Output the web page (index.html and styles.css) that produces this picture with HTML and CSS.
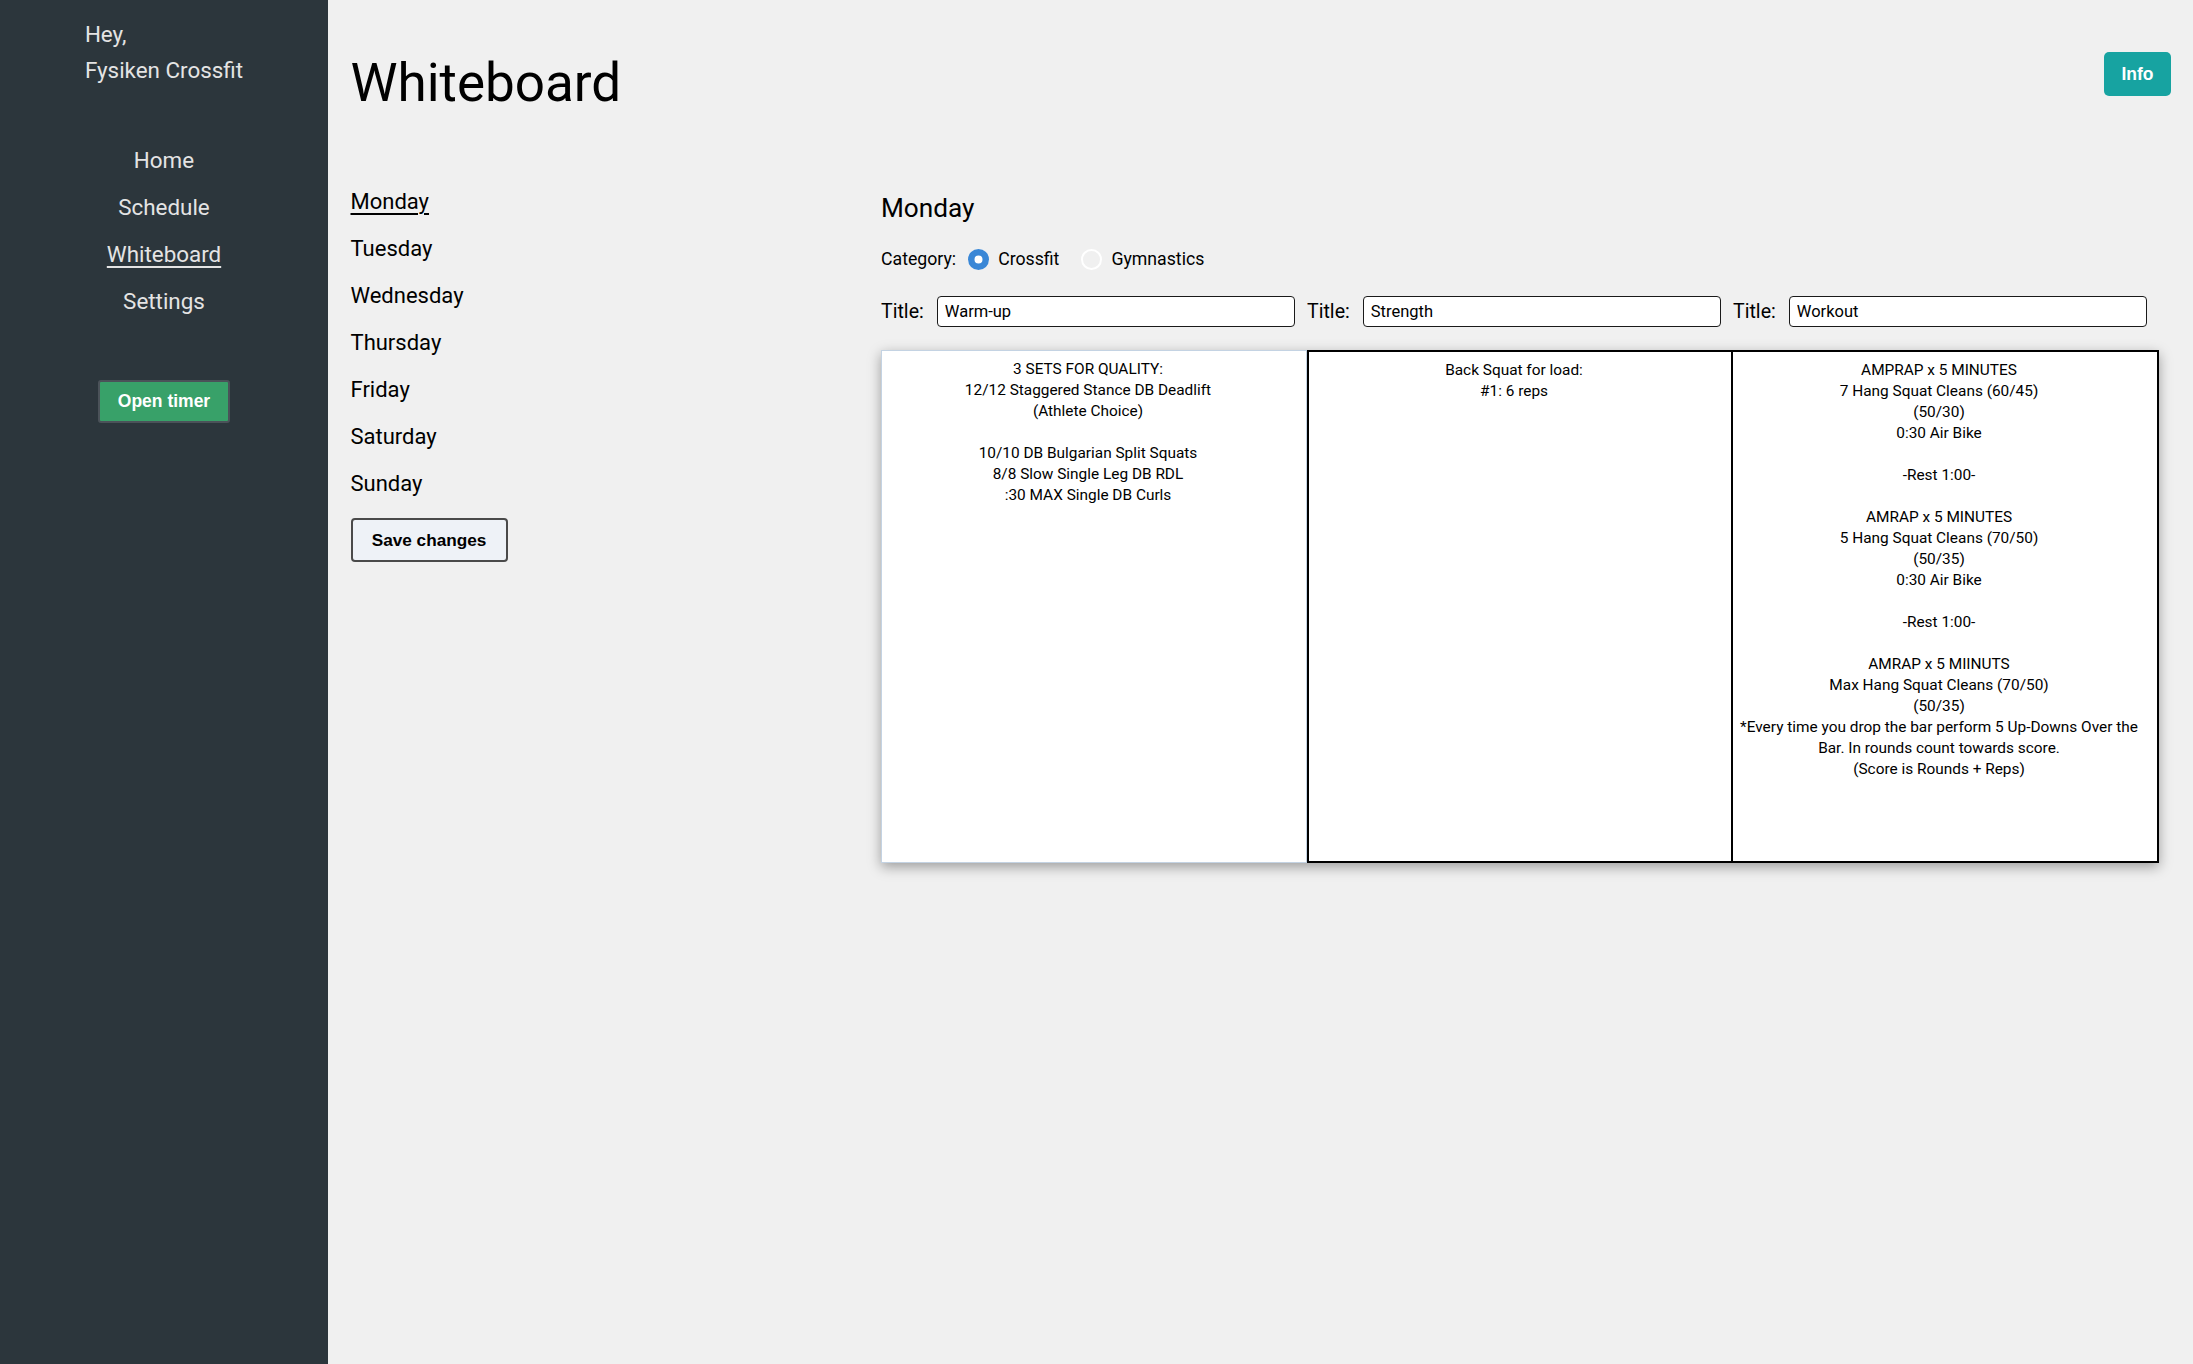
FILE: index.html
```html
<!DOCTYPE html>
<html lang="en">
<head>
<meta charset="utf-8">
<title>Whiteboard</title>
<link rel="stylesheet" href="styles.css">
</head>
<body>
<div class="app">
  <aside class="sidebar">
    <div class="greeting">Hey,<br>Fysiken Crossfit</div>
    <nav class="nav">
      <a class="nav-link">Home</a>
      <a class="nav-link">Schedule</a>
      <a class="nav-link nav-link-active">Whiteboard</a>
      <a class="nav-link">Settings</a>
    </nav>
    <button class="timer-btn">Open timer</button>
  </aside>
  <main class="main">
    <header class="header">
      <h1 class="page-title">Whiteboard</h1>
      <button class="info-btn">Info</button>
    </header>
    <div class="content">
      <div class="days">
        <ul class="day-list">
          <li><a class="day day-active">Monday</a></li>
          <li><a class="day">Tuesday</a></li>
          <li><a class="day">Wednesday</a></li>
          <li><a class="day">Thursday</a></li>
          <li><a class="day">Friday</a></li>
          <li><a class="day">Saturday</a></li>
          <li><a class="day">Sunday</a></li>
        </ul>
        <button class="save-btn">Save changes</button>
      </div>
      <section class="editor">
        <h3 class="day-title">Monday</h3>
        <div class="category">
          <span class="category-label">Category:</span>
          <label class="radio"><input type="radio" name="cat" checked><span>Crossfit</span></label>
          <label class="radio"><input type="radio" name="cat"><span>Gymnastics</span></label>
        </div>
        <div class="titles">
          <label class="title-field"><span class="title-label">Title:</span><input class="title-input" type="text" value="Warm-up"></label>
          <label class="title-field"><span class="title-label">Title:</span><input class="title-input" type="text" value="Strength"></label>
          <label class="title-field"><span class="title-label">Title:</span><input class="title-input" type="text" value="Workout"></label>
        </div>
        <div class="board">
          <div class="cell cell-first">3 SETS FOR QUALITY:<br>12/12 Staggered Stance DB Deadlift<br>(Athlete Choice)<br><br>10/10 DB Bulgarian Split Squats<br>8/8 Slow Single Leg DB RDL<br>:30 MAX Single DB Curls</div>
          <div class="cell cell-mid">Back Squat for load:<br>#1: 6 reps</div>
          <div class="cell cell-last">AMPRAP x 5 MINUTES<br>7 Hang Squat Cleans (60/45)<br>(50/30)<br>0:30 Air Bike<br><br>-Rest 1:00-<br><br>AMRAP x 5 MINUTES<br>5 Hang Squat Cleans (70/50)<br>(50/35)<br>0:30 Air Bike<br><br>-Rest 1:00-<br><br>AMRAP x 5 MIINUTS<br>Max Hang Squat Cleans (70/50)<br>(50/35)<br>*Every time you drop the bar perform 5 Up-Downs Over the Bar. In rounds count towards score.<br>(Score is Rounds + Reps)</div>
        </div>
      </section>
    </div>
  </main>
</div>
</body>
</html>
```

FILE: styles.css
```css
* {
  box-sizing: border-box;
}

html, body {
  margin: 0;
  padding: 0;
  height: 100%;
}

body {
  font-family: Roboto, "Liberation Sans", sans-serif;
  background: #f0f0f0;
  color: #000;
}

.app {
  display: flex;
  min-height: 100vh;
}

/* Sidebar */
.sidebar {
  width: 328px;
  flex: none;
  background: #2c363c;
  color: #e4e4e4;
  display: flex;
  flex-direction: column;
  align-items: center;
}

.greeting {
  padding-top: 16px;
  font-size: 22.4px;
  line-height: 36px;
  text-align: left;
}

.nav {
  margin-top: 49px;
  display: flex;
  flex-direction: column;
  align-items: center;
}

.nav-link {
  display: block;
  font-size: 22.4px;
  line-height: 47px;
  height: 47px;
  color: #e4e4e4;
  text-decoration: none;
}

.nav-link-active {
  text-decoration: underline;
  text-underline-offset: 4px;
  text-decoration-thickness: 2px;
}

.timer-btn {
  margin-top: 55px;
  width: 132px;
  height: 43px;
  background: #38a169;
  color: #fff;
  border: 2px solid #4b5259;
  border-radius: 3px;
  font-family: "Liberation Sans", Arial, sans-serif;
  font-weight: bold;
  font-size: 17.5px;
  padding: 0;
}

/* Main */
.main {
  flex: 1;
  padding: 52px 22px 0 22.5px;
}

.header {
  display: flex;
  justify-content: space-between;
  align-items: flex-start;
}

.page-title {
  margin: 0;
  font-size: 53px;
  font-weight: 400;
  line-height: 63px;
}

.info-btn {
  width: 67px;
  height: 44px;
  background: #17a3a1;
  color: #fff;
  border: none;
  border-radius: 5px;
  font-family: "Liberation Sans", Arial, sans-serif;
  font-weight: bold;
  font-size: 17.5px;
  padding: 0;
}

.content {
  display: flex;
  margin-top: 63px;
}

.days {
  width: 530.5px;
  flex: none;
}

.day-list {
  list-style: none;
  margin: 0;
  padding: 0;
}

.day {
  display: block;
  font-size: 22px;
  line-height: 47px;
  height: 47px;
  color: #000;
  text-decoration: none;
}

.day-active {
  text-decoration: underline;
  text-underline-offset: 4px;
  text-decoration-thickness: 1.5px;
}

.save-btn {
  margin-top: 11px;
  width: 157px;
  height: 44px;
  background: #eef2f7;
  color: #000;
  border: 2px solid #4a4a4a;
  border-radius: 4px;
  font-family: "Liberation Sans", Arial, sans-serif;
  font-weight: bold;
  font-size: 17.2px;
  padding: 0;
}

/* Editor */
.editor {
  flex: 1;
  padding-right: 12px;
  padding-top: 14.7px;
}

.day-title {
  margin: 0;
  font-size: 26.2px;
  font-weight: 400;
  line-height: 30.7px;
}

.category {
  margin-top: 25px;
  display: flex;
  align-items: center;
  height: 22px;
  font-size: 17.7px;
}

.category-label {
  margin-right: 12px;
}

.radio {
  display: flex;
  align-items: center;
  gap: 9px;
  margin-right: 22px;
}

.radio input {
  appearance: none;
  -webkit-appearance: none;
  margin: 0;
  width: 21px;
  height: 21px;
  border-radius: 50%;
  border: 2px solid #fff;
  background: transparent;
}

.radio input:checked {
  border: none;
  background: #fff;
  box-shadow: inset 0 0 0 6.5px #3a87d6;
}

.titles {
  margin-top: 26px;
  display: grid;
  grid-template-columns: repeat(3, 1fr);
}

.title-field {
  display: flex;
  align-items: center;
  gap: 13px;
}

.title-label {
  font-size: 19.6px;
}

.title-input {
  width: 358px;
  height: 31px;
  border: 1px solid #1a1a1a;
  border-radius: 4px;
  background: #fff;
  padding: 0 7px;
  font-family: Roboto, "Liberation Sans", sans-serif;
  font-size: 16.5px;
  color: #000;
}

.board {
  margin-top: 23px;
  display: grid;
  grid-template-columns: repeat(3, 1fr);
  height: 513px;
  box-shadow: 0 4px 12px rgba(0, 0, 0, 0.35);
}

.cell {
  background: #fff;
  font-size: 15.4px;
  line-height: 21px;
  text-align: center;
  padding: 8px 16px 0 4px;
}

.cell-first {
  border: 1px solid #c4d3e3;
}

.cell-mid {
  border: 2px solid #000;
}

.cell-last {
  border: 2px solid #000;
  border-left: none;
}
```
